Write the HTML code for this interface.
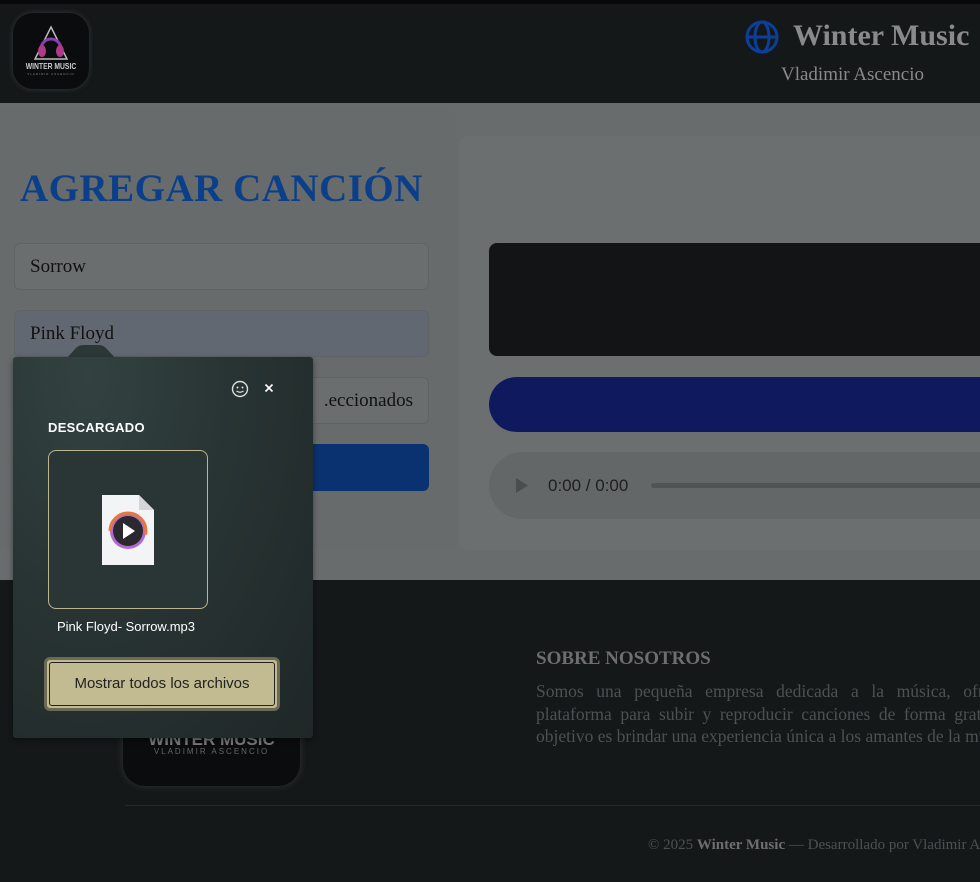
<!DOCTYPE html>
<html><head><meta charset="utf-8">
<style>
*{margin:0;padding:0;box-sizing:border-box}
body{width:980px;height:882px;overflow:hidden;background:#141819;font-family:"Liberation Serif",serif;position:relative}
.abs{position:absolute}
</style></head><body>
<div class="abs" style="left:0;top:0;width:980px;height:4px;background:#07090a"></div>
<div class="abs" style="left:0;top:4px;width:980px;height:99px;background:#141819"></div>
<!-- logo -->
<div class="abs" style="left:13px;top:13px;width:76px;height:76px;border-radius:20px;background:#0b0c0d;box-shadow:0 0 6px rgba(120,120,120,.35)">
<svg width="76" height="76" viewBox="0 0 76 76">
<path d="M38 14 L54 46 L22 46 Z" fill="none" stroke="#bbb" stroke-width="1.5"/>
<path d="M28 36 a10 10 0 0 1 20 0" fill="none" stroke="#8a3fb0" stroke-width="3"/>
<ellipse cx="29" cy="38" rx="4" ry="6" fill="#b03a8a"/><ellipse cx="47" cy="38" rx="4" ry="6" fill="#b03a8a"/>
<text x="38" y="56" font-family="Liberation Sans" font-weight="bold" font-size="8" fill="#ccc" text-anchor="middle" transform="translate(38 0) scale(0.85 1) translate(-38 0)">WINTER MUSIC</text>
<text x="38" y="62" font-family="Liberation Sans" font-size="3" fill="#888" text-anchor="middle" letter-spacing="1">VLADIMIR ASCENCIO</text>
</svg></div>
<svg class="abs" style="left:745px;top:20px" width="34" height="34" viewBox="0 0 34 34"><g fill="none" stroke="#0b3f9a" stroke-width="3"><circle cx="17" cy="17" r="15"/><ellipse cx="17" cy="17" rx="7" ry="15"/><line x1="2" y1="17" x2="32" y2="17"/></g></svg>
<div class="abs" style="left:793px;top:19px;font-size:30px;font-weight:bold;color:#8a8a8a">Winter Music</div>
<div class="abs" style="left:781px;top:64px;font-size:19px;color:#8a8a8a">Vladimir Ascencio</div>
<!-- main -->
<div class="abs" style="left:0;top:103px;width:980px;height:477px;background:#686c6c"></div>
<div class="abs" style="left:0;top:110px;width:456px;height:440px;background:#676b6b;border-radius:0 8px 8px 0"></div>
<div class="abs" style="left:459px;top:136px;width:530px;height:414px;background:#6b6f6f;border-radius:8px"></div>
<div class="abs" style="left:20px;top:166px;font-size:39px;font-weight:bold;color:#0b3f8a;letter-spacing:.5px">AGREGAR CANCIÓN</div>
<div class="abs" style="left:14px;top:243px;width:415px;height:47px;border:1px solid #5f6363;border-radius:6px;background:#6a6e6e;padding:12px 15px;font-size:19px;color:#111">Sorrow</div>
<div class="abs" style="left:14px;top:310px;width:415px;height:47px;border:1px solid #5f6363;border-radius:6px;background:#626872;padding:12px 15px;font-size:19px;color:#111">Pink Floyd</div>
<div class="abs" style="left:14px;top:377px;width:415px;height:47px;border:1px solid #5f6363;border-radius:6px;background:#6a6e6e;padding:12px 15px;font-size:19px;color:#111;text-align:right">.eccionados</div>
<div class="abs" style="left:14px;top:444px;width:415px;height:47px;border-radius:6px;background:#0a3270"></div>
<div class="abs" style="left:489px;top:243px;width:500px;height:113px;border-radius:8px;background:#121415"></div>
<div class="abs" style="left:489px;top:377px;width:500px;height:55px;border-radius:28px 0 0 28px;background:#0f1a5e"></div>
<div class="abs" style="left:489px;top:452px;width:500px;height:67px;border-radius:34px 0 0 34px;background:#636767"></div>
<svg class="abs" style="left:515px;top:477px" width="14" height="18"><path d="M1 1 L13 8.5 L1 16 Z" fill="#4a4e4e"/></svg>
<div class="abs" style="left:548px;top:476px;font-family:'Liberation Sans',sans-serif;font-size:17px;color:#1e2020">0:00 / 0:00</div>
<div class="abs" style="left:651px;top:483px;width:340px;height:5px;border-radius:3px;background:#505454"></div>
<!-- footer -->
<div class="abs" style="left:123px;top:600px;width:177px;height:186px;border-radius:22px;background:#0b0c0d;box-shadow:0 0 8px rgba(120,120,120,.3)"></div>
<div class="abs" style="left:123px;top:730px;width:177px;text-align:center;font-family:'Liberation Sans',sans-serif;font-weight:bold;font-size:17px;color:#777">WINTER MUSIC</div>
<div class="abs" style="left:123px;top:747px;width:177px;text-align:center;font-family:'Liberation Sans',sans-serif;font-size:8px;letter-spacing:2px;color:#666">VLADIMIR ASCENCIO</div>
<div class="abs" style="left:536px;top:648px;font-size:19px;font-weight:bold;color:#6e6e6e">SOBRE NOSOTROS</div>
<div class="abs" style="left:536px;top:680px;width:540px;font-size:17.5px;line-height:22.5px;color:#4d5152;text-align:justify">Somos una pequeña empresa dedicada a la música, ofreciendo una plataforma para subir y reproducir canciones de forma gratuita. Nuestro objetivo es brindar una experiencia única a los amantes de la música.</div>
<div class="abs" style="left:125px;top:805px;width:855px;height:1px;background:#24292a"></div>
<div class="abs" style="left:648px;top:837px;white-space:nowrap;font-size:15px;color:#4d5152">© 2025 <b style="color:#6e6e6e">Winter Music</b> — Desarrollado por Vladimir Ascencio</div>
<!-- popup -->
<svg class="abs" style="left:66px;top:345px" width="50" height="14"><path d="M0 14 L10 3 Q13 0 17 0 L33 0 Q37 0 40 3 L50 14 Z" fill="#2c3837"/></svg>
<div class="abs" style="left:13px;top:357px;width:300px;height:381px;border-radius:3px;background:radial-gradient(ellipse at 25% 5%,#334241 0%,#283433 45%,#1f2727 100%);box-shadow:0 2px 6px rgba(0,0,0,.4)"></div>
<svg class="abs" style="left:231px;top:380px" width="18" height="18"><circle cx="9" cy="9" r="7.5" fill="none" stroke="#ddd" stroke-width="1.4"/><circle cx="6.5" cy="7.5" r="1" fill="#ddd"/><circle cx="11.5" cy="7.5" r="1" fill="#ddd"/><path d="M5.5 11 Q9 13.5 12.5 11" fill="none" stroke="#ddd" stroke-width="1.2"/></svg>
<svg class="abs" style="left:264px;top:383px" width="10" height="10"><path d="M1.5 1.5 L8.5 8.5 M8.5 1.5 L1.5 8.5" stroke="#fff" stroke-width="1.6"/></svg>
<div class="abs" style="left:48px;top:420px;font-family:'Liberation Sans',sans-serif;font-weight:bold;font-size:13px;color:#fff;letter-spacing:.3px">DESCARGADO</div>
<div class="abs" style="left:48px;top:450px;width:160px;height:159px;border:1.5px solid #bdb590;border-radius:8px;background:#2a3635"></div>
<svg class="abs" style="left:102px;top:495px" width="53" height="71"><path d="M0 0 L37 0 L52 15 L52 70 L0 70 Z" fill="#f3f4f6"/><path d="M37 0 L37 15 L52 15 Z" fill="#d4d6da"/><circle cx="26" cy="36" r="18" fill="#b06ad0"/><circle cx="26" cy="36" r="18" fill="none" stroke="#e8783a" stroke-width="3" stroke-dasharray="60 200" transform="rotate(180 26 36)"/><circle cx="26" cy="36" r="15" fill="#2a2a2e"/><path d="M21 28 L33 36 L21 44 Z" fill="#fff"/></svg>
<div class="abs" style="left:57px;top:619px;font-family:'Liberation Sans',sans-serif;font-size:13px;color:#fff">Pink Floyd- Sorrow.mp3</div>
<div class="abs" style="left:44px;top:657px;width:236px;height:54px;border:3px solid #6b6a55;border-radius:6px;background:#c2bb91;padding:2px"><div style="width:100%;height:100%;border:1.5px solid #222;border-radius:3px;text-align:center;line-height:42px;font-family:'Liberation Sans',sans-serif;font-size:15px;color:#222">Mostrar todos los archivos</div></div>
</body></html>
